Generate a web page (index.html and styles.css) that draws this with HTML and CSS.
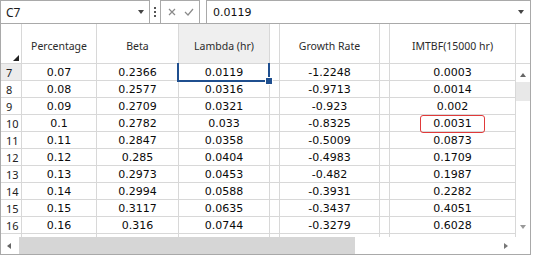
FILE: index.html
```html
<!DOCTYPE html>
<html>
<head>
<meta charset="utf-8">
<link rel="stylesheet" href="styles.css">
</head>
<body>
<div class="app">
  <div class="topbar">
    <div class="namebox"><span class="name">C7</span><span class="tri-down dark"></span></div>
    <div class="dots"><i></i><i></i><i></i></div>
    <div class="actions">
      <svg width="8" height="8" viewBox="0 0 8 8"><path d="M1 1L7 7M7 1L1 7" stroke="#8a8a8a" stroke-width="1.2"/></svg>
      <svg width="10" height="8" viewBox="0 0 10 8"><path d="M1 4L4 7L9 1" stroke="#8a8a8a" stroke-width="1.2" fill="none"/></svg>
    </div>
    <div class="formula"><span class="fval">0.0119</span><span class="tri-down dark"></span></div>
  </div>
  <div class="sheet">
    <div class="main">
      <div class="grid">
        <div class="hc corner"><span class="corner-tri"></span></div>
        <div class="hc">Percentage</div>
        <div class="hc">Beta</div>
        <div class="hc sel">Lambda (hr)</div>
        <div class="hc"></div>
        <div class="hc">Growth Rate</div>
        <div class="hc"></div>
        <div class="hc">IMTBF(15000 hr)</div>

        <div class="rh cur">7</div><div class="c">0.07</div><div class="c">0.2366</div><div class="c active">0.0119</div><div class="c"></div><div class="c">-1.2248</div><div class="c"></div><div class="c">0.0003</div>
        <div class="rh">8</div><div class="c">0.08</div><div class="c">0.2577</div><div class="c">0.0316</div><div class="c"></div><div class="c">-0.9713</div><div class="c"></div><div class="c">0.0014</div>
        <div class="rh">9</div><div class="c">0.09</div><div class="c">0.2709</div><div class="c">0.0321</div><div class="c"></div><div class="c">-0.923</div><div class="c"></div><div class="c">0.002</div>
        <div class="rh">10</div><div class="c">0.1</div><div class="c">0.2782</div><div class="c">0.033</div><div class="c"></div><div class="c">-0.8325</div><div class="c"></div><div class="c"><span class="mark">0.0031</span></div>
        <div class="rh">11</div><div class="c">0.11</div><div class="c">0.2847</div><div class="c">0.0358</div><div class="c"></div><div class="c">-0.5009</div><div class="c"></div><div class="c">0.0873</div>
        <div class="rh">12</div><div class="c">0.12</div><div class="c">0.285</div><div class="c">0.0404</div><div class="c"></div><div class="c">-0.4983</div><div class="c"></div><div class="c">0.1709</div>
        <div class="rh">13</div><div class="c">0.13</div><div class="c">0.2973</div><div class="c">0.0453</div><div class="c"></div><div class="c">-0.482</div><div class="c"></div><div class="c">0.1987</div>
        <div class="rh">14</div><div class="c">0.14</div><div class="c">0.2994</div><div class="c">0.0588</div><div class="c"></div><div class="c">-0.3931</div><div class="c"></div><div class="c">0.2282</div>
        <div class="rh">15</div><div class="c">0.15</div><div class="c">0.3117</div><div class="c">0.0635</div><div class="c"></div><div class="c">-0.3437</div><div class="c"></div><div class="c">0.4051</div>
        <div class="rh">16</div><div class="c">0.16</div><div class="c">0.316</div><div class="c">0.0744</div><div class="c"></div><div class="c">-0.3279</div><div class="c"></div><div class="c">0.6028</div>
        <div class="rh"></div><div class="c"></div><div class="c"></div><div class="c"></div><div class="c"></div><div class="c"></div><div class="c"></div><div class="c"></div>
      </div>
      <div class="vscroll">
        <div class="vhead"></div>
        <div class="vtrack">
          <span class="tri-up"></span>
          <div class="vthumb"></div>
          <div class="vfill"></div>
          <span class="tri-down light"></span>
        </div>
      </div>
    </div>
    <div class="bottom">
      <div class="hscroll">
        <span class="tri-left"></span>
        <div class="hthumb"></div>
        <div class="hfill"></div>
        <span class="tri-right"></span>
      </div>
      <div class="sizer"></div>
    </div>
  </div>
</div>
</body>
</html>
```
FILE: styles.css
```css
* { box-sizing: border-box; }
html, body { margin: 0; padding: 0; background: #fff; }
body { width: 533px; height: 255px; overflow: hidden; font-family: "Noto Sans", sans-serif; }

.app { width: 531px; }

.topbar { display: flex; height: 23px; align-items: stretch; }
.namebox {
  width: 150px; border: 1px solid #a9a9a9; border-bottom: none;
  display: flex; align-items: center; justify-content: space-between;
  padding: 0 5px 0 5px;
}
.name { font-size: 12px; color: #1a1a1a; }
.dots { width: 10px; display: flex; flex-direction: column; align-items: center; justify-content: center; gap: 2px; }
.dots i { display: block; width: 2px; height: 2px; background: #555; }
.actions {
  width: 40px; border: 1px solid #a9a9a9; border-bottom: none;
  display: flex; align-items: center; justify-content: space-between; padding: 0 5px 0 7px;
}
.formula {
  margin-left: 6px; flex: 1; border: 1px solid #a9a9a9; border-bottom: none;
  display: flex; align-items: center; justify-content: space-between; padding: 0 6px 0 6px;
}
.fval { font-family: "DejaVu Sans", sans-serif; font-size: 11px; color: #111; }

.tri-down { width: 0; height: 0; border-left: 3.5px solid transparent; border-right: 3.5px solid transparent; border-top: 4px solid #555; }
.tri-down.dark { border-top-color: #444; }
.tri-down.light { border-top-color: #999; }
.tri-up { width: 0; height: 0; border-left: 3.5px solid transparent; border-right: 3.5px solid transparent; border-bottom: 4px solid #666; }
.tri-left { width: 0; height: 0; border-top: 3.5px solid transparent; border-bottom: 3.5px solid transparent; border-right: 4px solid #666; }
.tri-right { width: 0; height: 0; border-top: 3.5px solid transparent; border-bottom: 3.5px solid transparent; border-left: 4px solid #777; }

.sheet {
  width: 531px; height: 232px; border: 1px solid #a9a9a9;
  display: flex; flex-direction: column; overflow: hidden;
}
.main { display: flex; height: 213px; overflow: hidden; }
.grid {
  display: grid;
  grid-template-columns: 21px 75px 82px 91px 10px 100px 10px 126px;
  grid-template-rows: 40px repeat(11, 17px);
  width: 515px;
}
.hc, .rh, .c { border-right: 1px solid #d8d8d8; border-bottom: 1px solid #d8d8d8; }
.hc {
  display: flex; align-items: center; justify-content: center;
  padding-top: 4px;
  font-size: 10.5px; color: #2b2b2b; background: #fff;
}
.hc.sel { background: #efefef; }
.corner { position: relative; }
.corner-tri {
  position: absolute; right: 2px; bottom: 2px; width: 0; height: 0;
  border-left: 6px solid transparent; border-bottom: 6px solid #222;
}
.rh {
  display: flex; align-items: center; padding-left: 5px;
  font-size: 11px; color: #222;
}
.rh.cur { background: #ececec; }
.c {
  display: flex; align-items: center; justify-content: center;
  font-family: "DejaVu Sans", sans-serif; font-size: 11px; color: #0a0a0a;
}
.c.active { position: relative; }
.c.active::after {
  content: ""; position: absolute; left: -2px; right: -1px; top: -1px; bottom: -2px;
  border: 2px solid #1f4f8f; border-top: none;
}
.c.active::before {
  content: ""; position: absolute; right: -4px; bottom: -5px; width: 6px; height: 6px;
  background: #1f4f8f; border: 1px solid #fff; z-index: 2; box-sizing: content-box;
}
.mark {
  display: inline-flex; align-items: center; justify-content: center;
  width: 65px; height: 18px; margin-top: 1px;
  border: 1.5px solid #e03a3a; border-radius: 3px;
}

.vscroll { width: 14px; display: flex; flex-direction: column; }
.vhead { height: 40px; border-bottom: 1px solid #d8d8d8; }
.vtrack { flex: 1; display: flex; flex-direction: column; align-items: center; padding-top: 9px; }
.vthumb { width: 14px; height: 19px; background: #e8e8e8; margin-top: 5px; }
.vfill { flex: 1; }
.vtrack .tri-down { margin-bottom: 8px; }

.bottom { display: flex; height: 17px; }
.hscroll {
  width: 515px; display: flex; align-items: center; padding-left: 6px; padding-right: 8px;
}
.hthumb { width: 336px; height: 17px; background: #d6d6d6; margin-left: 8px; }
.hfill { flex: 1; }
.sizer { flex: 1; }
```
